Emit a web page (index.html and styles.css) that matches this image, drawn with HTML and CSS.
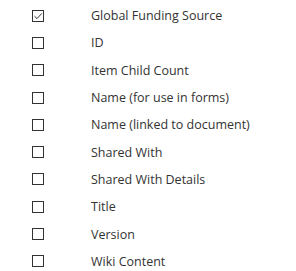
FILE: index.html
```html
<!DOCTYPE html>
<html>
<head>
<meta charset="utf-8">
<link rel="stylesheet" href="styles.css">
</head>
<body>
<ul class="list">
  <li class="row"><span class="box checked"><svg viewBox="0 0 12 12" width="12" height="12"><path d="M2.5 6.2 L5 8.6 L9.8 3.4" fill="none" stroke="#333" stroke-width="1"/></svg></span><span class="label">Global Funding Source</span></li>
  <li class="row"><span class="box"></span><span class="label">ID</span></li>
  <li class="row"><span class="box"></span><span class="label">Item Child Count</span></li>
  <li class="row"><span class="box"></span><span class="label">Name (for use in forms)</span></li>
  <li class="row"><span class="box"></span><span class="label">Name (linked to document)</span></li>
  <li class="row"><span class="box"></span><span class="label">Shared With</span></li>
  <li class="row"><span class="box"></span><span class="label">Shared With Details</span></li>
  <li class="row"><span class="box"></span><span class="label">Title</span></li>
  <li class="row"><span class="box"></span><span class="label">Version</span></li>
  <li class="row"><span class="box"></span><span class="label">Wiki Content</span></li>
</ul>
</body>
</html>
```
FILE: styles.css
```css
html, body {
  margin: 0;
  padding: 0;
  background: #fff;
}
.list {
  list-style: none;
  margin: 0;
  padding: 2px 0 0 32px;
  font-family: "Open Sans", "Noto Sans", sans-serif;
  font-size: 12.5px;
  color: #333;
}
.row {
  display: flex;
  align-items: center;
  height: 27.3px;
}
.box {
  box-sizing: border-box;
  width: 12px;
  height: 12px;
  border: 1px solid #333;
  flex: none;
  position: relative;
}
.box svg {
  position: absolute;
  left: -1px;
  top: -1px;
}
.label {
  margin-left: 47px;
  white-space: nowrap;
}
```
